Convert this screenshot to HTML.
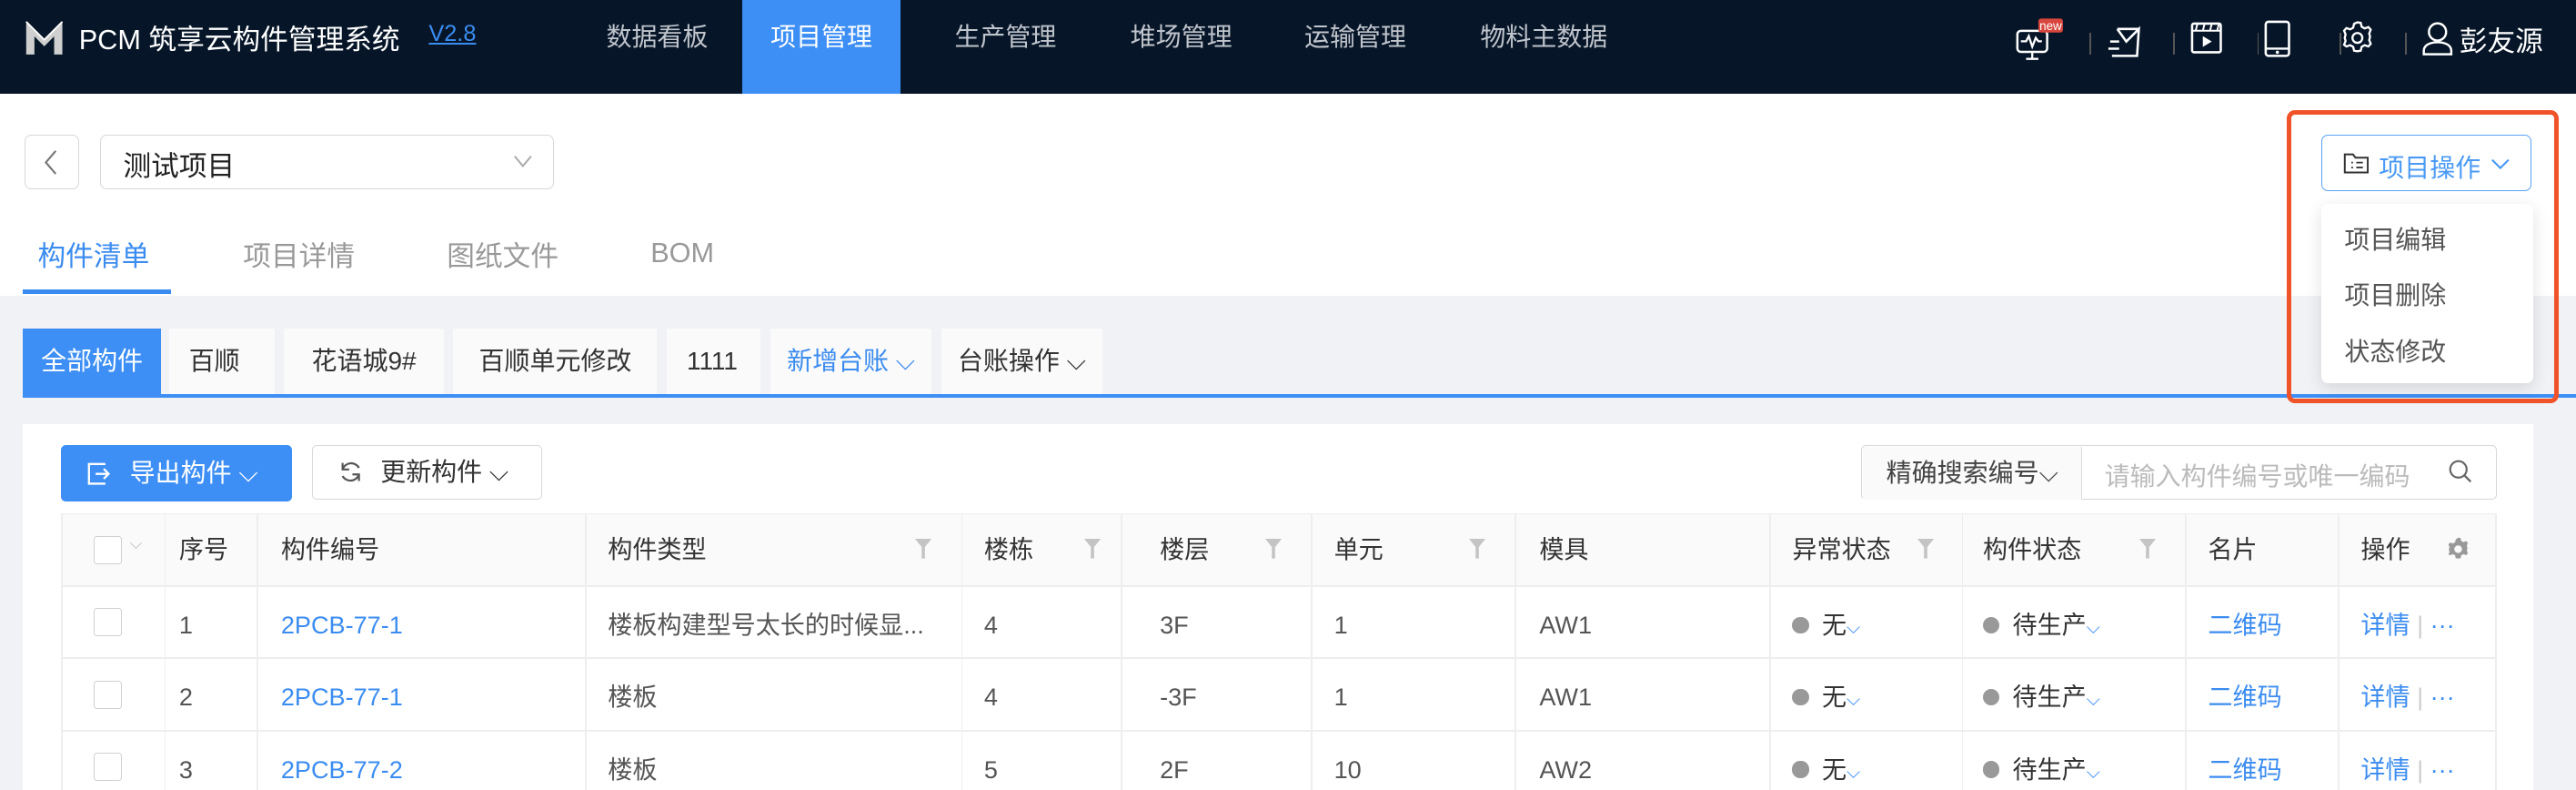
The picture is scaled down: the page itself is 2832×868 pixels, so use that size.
<!DOCTYPE html>
<html><head><meta charset="utf-8"><style>
html,body{margin:0;padding:0;width:2832px;height:868px;overflow:hidden;background:#f0f2f5}
#r{zoom:1.80612;width:1568px;height:481px;position:relative;font-family:"Liberation Sans","Noto Sans CJK SC",sans-serif;color:#333;overflow:hidden}
.a{position:absolute}
.hd{left:0;top:0;width:1568px;height:57px;background:#061628}
.nav{top:0;height:57px;line-height:45px;font-size:15.5px;color:#c0c4cc}
.ico{top:11px}
.sep{top:20px;width:1px;height:13px;background:#555}
.wt{left:0;top:57px;width:1568px;height:123px;background:#fff}
.st{top:200px;height:40px;line-height:40px;font-size:15.5px;background:#fafafa;color:#333;text-align:center}
.th{top:312px;height:44px;line-height:44px;font-size:15px;color:#333;background:#fafafa}
.td{height:44px;line-height:44px;font-size:15px;color:#555}
.bl{color:#3b8cf0}
.vl{width:1px;background:#eee}
.hl{height:1px;background:#eee;left:37px;width:1483px}
.cb{width:16px;height:16px;border:1px solid #d0d0d0;border-radius:2px;background:#fff}
.dot{display:inline-block;width:10px;height:10px;border-radius:50%;background:#999;margin-right:8px;vertical-align:0}
.flt{width:10px;height:12px}
.tab{top:142px;font-size:17px;color:#999}
</style></head><body><div id="r">
<div class="a hd"></div>
<svg class="a" style="left:15px;top:12px" width="24" height="22" viewBox="0 0 24 22"><path d="M1 21V1l11 11L23 1v20h-5V10l-6 6-6-6v11z" fill="#cfcfcf"/><path d="M1 1l11 11L23 1" stroke="#fff" stroke-width="1" fill="none"/></svg>
<div class="a" style="left:48px;top:10px;font-size:17px;color:#fff">PCM 筑享云构件管理系统</div>
<div class="a" style="left:261px;top:13px;font-size:14px;color:#3b8cf0;text-decoration:underline">V2.8</div>
<div class="a nav" style="left:369px">数据看板</div>
<div class="a nav" style="left:452px;width:96px;background:#3d8ff5;color:#fff;text-align:center">项目管理</div>
<div class="a nav" style="left:581px">生产管理</div>
<div class="a nav" style="left:688px">堆场管理</div>
<div class="a nav" style="left:794px">运输管理</div>
<div class="a nav" style="left:901px">物料主数据</div>
<svg class="a ico" style="left:1226px" width="32" height="26" viewBox="0 0 30 24"><rect x="2" y="7" width="17" height="12" rx="2" fill="none" stroke="#fff" stroke-width="1.3"/><path d="M7 23h7M10.5 19v4M4 13h3l1.5-3 2 6 2-5 1.5 2h2" fill="none" stroke="#fff" stroke-width="1.2"/><rect x="14" y="0" width="14" height="8" rx="1.5" fill="#d9463e"/><text x="21" y="6.5" font-size="7" fill="#fff" text-anchor="middle" font-family="Liberation Sans">new</text></svg>
<div class="a sep" style="left:1272px"></div>
<svg class="a ico" style="left:1280px" width="24" height="24" viewBox="0 0 22 22"><path d="M8 6l5 7 7-7-1 15H9M4 13h5M3 17h6M5 21h4" fill="none" stroke="#fff" stroke-width="1.3"/><path d="M8 6h12" stroke="#fff" stroke-width="1.3"/></svg>
<div class="a sep" style="left:1323px"></div>
<svg class="a ico" style="left:1332px" width="24" height="24" viewBox="0 0 22 22"><rect x="2" y="3" width="16" height="16" rx="1" fill="none" stroke="#fff" stroke-width="1.3"/><path d="M2 7h16M5 3l-1 4M9 3l-1 4M13 3l-1 4M17 3l-1 4" stroke="#fff" stroke-width="1"/><path d="M8 10v6l5-3z" fill="#fff"/></svg>
<div class="a sep" style="left:1374px"></div>
<svg class="a ico" style="left:1375px" width="24" height="24" viewBox="0 0 22 22"><rect x="4" y="2" width="13" height="19" rx="1.5" fill="none" stroke="#fff" stroke-width="1.3"/><path d="M4 17h13" stroke="#fff" stroke-width="1.2"/><circle cx="10.5" cy="19" r="0.9" fill="#fff"/></svg>
<div class="a sep" style="left:1424px"></div>
<svg class="a ico" style="left:1423px" width="24" height="24" viewBox="0 0 24 24"><path d="M12 2.5l2 .3.6 2.4 1.8 1 2.3-.8 1.4 1.6-.9 2.3.5 2-.5 2 .9 2.3-1.4 1.6-2.3-.8-1.8 1-.6 2.4-2 .3-2-.3-.6-2.4-1.8-1-2.3.8L3.9 16.2l.9-2.3-.5-2 .5-2-.9-2.3 1.4-1.6 2.3.8 1.8-1 .6-2.4z" fill="none" stroke="#fff" stroke-width="1.3"/><circle cx="12" cy="12" r="3" fill="none" stroke="#fff" stroke-width="1.3"/></svg>
<div class="a sep" style="left:1464px"></div>
<svg class="a ico" style="left:1472px" width="23" height="23" viewBox="0 0 22 22"><circle cx="11" cy="8" r="5" fill="none" stroke="#fff" stroke-width="1.3"/><path d="M3 21v-2c0-3 3-5 8-5s8 2 8 5v2z" fill="none" stroke="#fff" stroke-width="1.3"/></svg>
<div class="a" style="left:1497px;top:11px;font-size:17px;color:#fff">彭友源</div>

<div class="a wt"></div>
<div class="a" style="left:15px;top:82px;width:32px;height:32px;border:1px solid #d8d8d8;border-radius:4px;background:#fff"></div>
<svg class="a" style="left:25px;top:91px" width="12" height="16" viewBox="0 0 12 16"><path d="M9 1L3 8l6 7" fill="none" stroke="#777" stroke-width="1.2"/></svg>
<div class="a" style="left:61px;top:82px;width:275px;height:32px;border:1px solid #d8d8d8;border-radius:4px;background:#fff"></div>
<div class="a" style="left:75px;top:87px;font-size:17px;color:#222">测试项目</div>
<svg class="a" style="left:312px;top:93px" width="12" height="10" viewBox="0 0 12 10"><path d="M1 2l5 6 5-6" fill="none" stroke="#aaa" stroke-width="1.1"/></svg>
<div class="a tab" style="left:23px;color:#3b8cf0">构件清单</div>
<div class="a" style="left:14px;top:176px;width:90px;height:3px;background:#3b8cf0"></div>
<div class="a tab" style="left:148px">项目详情</div>
<div class="a tab" style="left:272px">图纸文件</div>
<div class="a tab" style="left:396px;top:144px">BOM</div>

<div class="a st" style="left:14px;width:84px;background:#3d8ff5;color:#fff">全部构件</div>
<div class="a st" style="left:103px;width:64px;text-align:left;padding-left:12px;box-sizing:border-box">百顺</div>
<div class="a st" style="left:173px;width:97px">花语城9#</div>
<div class="a st" style="left:276px;width:124px">百顺单元修改</div>
<div class="a st" style="left:406px;width:57px;text-align:left;padding-left:12px;box-sizing:border-box;font-family:'Liberation Sans',sans-serif">1111</div>
<div class="a st" style="left:469px;width:98px;color:#3b8cf0">新增台账 ⌵</div>
<div class="a st" style="left:573px;width:98px">台账操作 ⌵</div>
<div class="a" style="left:14px;top:240px;width:1554px;height:2px;background:#3d8ff5"></div>

<div class="a" style="left:14px;top:258px;width:1528px;height:230px;background:#fff"></div>
<div class="a" style="left:37px;top:271px;width:141px;height:34px;background:#3d8ff5;border-radius:3px;color:#fff;font-size:15.5px;line-height:34px"><svg style="position:absolute;left:16px;top:10px" width="14" height="14" viewBox="0 0 14 14"><path d="M11 1H1v12h10M5 7h8M10 4l3 3-3 3" fill="none" stroke="#fff" stroke-width="1.3"/></svg><span style="position:absolute;left:42px">导出构件 ⌵</span></div>
<div class="a" style="left:190px;top:271px;width:139px;height:32px;border:1px solid #d8d8d8;border-radius:3px;font-size:15.5px;line-height:32px;color:#333"><svg style="position:absolute;left:16px;top:8px" width="14" height="15" viewBox="0 0 14 15"><path d="M12 5A5.5 5.5 0 0 0 2 6M2 10a5.5 5.5 0 0 0 10-1M2 2v4h4M12 13V9H8" fill="none" stroke="#555" stroke-width="1.2"/></svg><span style="position:absolute;left:41px">更新构件 ⌵</span></div>
<div class="a" style="left:1133px;top:271px;width:386px;height:32px;border:1px solid #d8d8d8;border-radius:3px"></div>
<div class="a" style="left:1134px;top:272px;width:133px;height:32px;background:#fafafa;border-right:1px solid #ddd;font-size:15.5px;line-height:32px;color:#444;text-align:center">精确搜索编号⌵</div>
<div class="a" style="left:1281px;top:278px;font-size:15.5px;color:#bbb">请输入构件编号或唯一编码</div>
<svg class="a" style="left:1490px;top:279px" width="16" height="16" viewBox="0 0 16 16"><circle cx="6.5" cy="6.5" r="5" fill="none" stroke="#666" stroke-width="1.2"/><path d="M10 10l4 4" stroke="#666" stroke-width="1.3"/></svg>

<div class="a th" style="left:37px;width:1483px"></div>
<div class="a cb" style="left:57px;top:326px"></div><div class="a" style="left:79px;top:325px;font-size:10px;color:#bbb">⌵</div>
<div class="a th" style="left:109px">序号</div>
<div class="a th" style="left:171px">构件编号</div>
<div class="a th" style="left:370px">构件类型</div>
<div class="a th" style="left:599px">楼栋</div>
<div class="a th" style="left:706px">楼层</div>
<div class="a th" style="left:812px">单元</div>
<div class="a th" style="left:937px">模具</div>
<div class="a th" style="left:1091px">异常状态</div>
<div class="a th" style="left:1207px">构件状态</div>
<div class="a th" style="left:1344px">名片</div>
<div class="a th" style="left:1437px">操作</div>
<svg class="a" style="left:1488px;top:326px" width="16" height="16" viewBox="0 0 24 24"><path d="M12 1.5l2.2.3.6 2.6 2 1.1 2.5-.9 1.6 1.7-1 2.5.6 2.2-.6 2.2 1 2.5-1.6 1.7-2.5-.9-2 1.1-.6 2.6-2.2.3-2.2-.3-.6-2.6-2-1.1-2.5.9L3.1 17l1-2.5-.6-2.2.6-2.2-1-2.5 1.6-1.7 2.5.9 2-1.1.6-2.6z" fill="#999"/><circle cx="12" cy="12" r="3.5" fill="#fafafa"/></svg>
<svg class="a flt" style="left:557px;top:328px" viewBox="0 0 10 12"><path d="M0 0h10L6 5v7H4V5z" fill="#c4c4c4"/></svg>
<svg class="a flt" style="left:660px;top:328px" viewBox="0 0 10 12"><path d="M0 0h10L6 5v7H4V5z" fill="#c4c4c4"/></svg>
<svg class="a flt" style="left:770px;top:328px" viewBox="0 0 10 12"><path d="M0 0h10L6 5v7H4V5z" fill="#c4c4c4"/></svg>
<svg class="a flt" style="left:894px;top:328px" viewBox="0 0 10 12"><path d="M0 0h10L6 5v7H4V5z" fill="#c4c4c4"/></svg>
<svg class="a flt" style="left:1167px;top:328px" viewBox="0 0 10 12"><path d="M0 0h10L6 5v7H4V5z" fill="#c4c4c4"/></svg>
<svg class="a flt" style="left:1302px;top:328px" viewBox="0 0 10 12"><path d="M0 0h10L6 5v7H4V5z" fill="#c4c4c4"/></svg>

<div class="a vl" style="left:37px;top:312px;height:170px"></div>
<div class="a vl" style="left:100px;top:312px;height:170px"></div>
<div class="a vl" style="left:156px;top:312px;height:170px"></div>
<div class="a vl" style="left:356px;top:312px;height:170px"></div>
<div class="a vl" style="left:585px;top:312px;height:170px"></div>
<div class="a vl" style="left:682px;top:312px;height:170px"></div>
<div class="a vl" style="left:798px;top:312px;height:170px"></div>
<div class="a vl" style="left:922px;top:312px;height:170px"></div>
<div class="a vl" style="left:1077px;top:312px;height:170px"></div>
<div class="a vl" style="left:1194px;top:312px;height:170px"></div>
<div class="a vl" style="left:1330px;top:312px;height:170px"></div>
<div class="a vl" style="left:1423px;top:312px;height:170px"></div>
<div class="a vl" style="left:1519px;top:312px;height:170px"></div>
<div class="a hl" style="top:312px"></div>
<div class="a hl" style="top:356px"></div>
<div class="a hl" style="top:400px"></div>
<div class="a hl" style="top:444px"></div>

<div class="a" style="left:0;top:358px;width:1568px;height:44px">
<div class="a cb" style="left:57px;top:12px"></div>
<div class="a td" style="left:109px">1</div>
<div class="a td bl" style="left:171px">2PCB-77-1</div>
<div class="a td" style="left:370px">楼板构建型号太长的时候显...</div>
<div class="a td" style="left:599px">4</div>
<div class="a td" style="left:706px">3F</div>
<div class="a td" style="left:812px">1</div>
<div class="a td" style="left:937px">AW1</div>
<div class="a td" style="left:1091px;color:#333"><span class="dot"></span>无<span class="bl" style="font-size:11px">⌵</span></div>
<div class="a td" style="left:1207px;color:#333"><span class="dot"></span>待生产<span class="bl" style="font-size:11px">⌵</span></div>
<div class="a td bl" style="left:1344px">二维码</div>
<div class="a td bl" style="left:1437px">详情 <span style="color:#ccc">|</span> ···</div>
</div>
<div class="a" style="left:0;top:402px;width:1568px;height:44px">
<div class="a cb" style="left:57px;top:12px"></div>
<div class="a td" style="left:109px">2</div>
<div class="a td bl" style="left:171px">2PCB-77-1</div>
<div class="a td" style="left:370px">楼板</div>
<div class="a td" style="left:599px">4</div>
<div class="a td" style="left:706px">-3F</div>
<div class="a td" style="left:812px">1</div>
<div class="a td" style="left:937px">AW1</div>
<div class="a td" style="left:1091px;color:#333"><span class="dot"></span>无<span class="bl" style="font-size:11px">⌵</span></div>
<div class="a td" style="left:1207px;color:#333"><span class="dot"></span>待生产<span class="bl" style="font-size:11px">⌵</span></div>
<div class="a td bl" style="left:1344px">二维码</div>
<div class="a td bl" style="left:1437px">详情 <span style="color:#ccc">|</span> ···</div>
</div>
<div class="a" style="left:0;top:446px;width:1568px;height:44px">
<div class="a cb" style="left:57px;top:12px"></div>
<div class="a td" style="left:109px">3</div>
<div class="a td bl" style="left:171px">2PCB-77-2</div>
<div class="a td" style="left:370px">楼板</div>
<div class="a td" style="left:599px">5</div>
<div class="a td" style="left:706px">2F</div>
<div class="a td" style="left:812px">10</div>
<div class="a td" style="left:937px">AW2</div>
<div class="a td" style="left:1091px;color:#333"><span class="dot"></span>无<span class="bl" style="font-size:11px">⌵</span></div>
<div class="a td" style="left:1207px;color:#333"><span class="dot"></span>待生产<span class="bl" style="font-size:11px">⌵</span></div>
<div class="a td bl" style="left:1344px">二维码</div>
<div class="a td bl" style="left:1437px">详情 <span style="color:#ccc">|</span> ···</div>
</div>

<div class="a" style="left:1413px;top:82px;width:127px;height:33px;border:1px solid #5aa2f5;border-radius:4px;background:#fff"></div>
<svg class="a" style="left:1426px;top:92px" width="16" height="14" viewBox="0 0 16 14"><path d="M1 2h5l1.5 2H15v9H1z" fill="none" stroke="#333" stroke-width="1.1"/><path d="M5 7h1M8 7h4M5 10h1M8 10h4" stroke="#333" stroke-width="1"/></svg>
<div class="a" style="left:1448px;top:90px;font-size:15.5px;color:#4a9af5">项目操作</div>
<svg class="a" style="left:1516px;top:95px" width="12" height="10" viewBox="0 0 12 10"><path d="M1 2l5 5 5-5" fill="none" stroke="#4a9af5" stroke-width="1.2"/></svg>
<div class="a" style="left:1413px;top:124px;width:129px;height:109px;background:#fff;border-radius:4px;box-shadow:0 3px 10px rgba(0,0,0,.12)"></div>
<div class="a" style="left:1427px;top:134px;font-size:15.5px;color:#555">项目编辑</div>
<div class="a" style="left:1427px;top:168px;font-size:15.5px;color:#555">项目删除</div>
<div class="a" style="left:1427px;top:202px;font-size:15.5px;color:#555">状态修改</div>
<div class="a" style="left:1392px;top:67px;width:160px;height:173px;border:3px solid #f0532a;border-radius:5px"></div>
</div></body></html>
